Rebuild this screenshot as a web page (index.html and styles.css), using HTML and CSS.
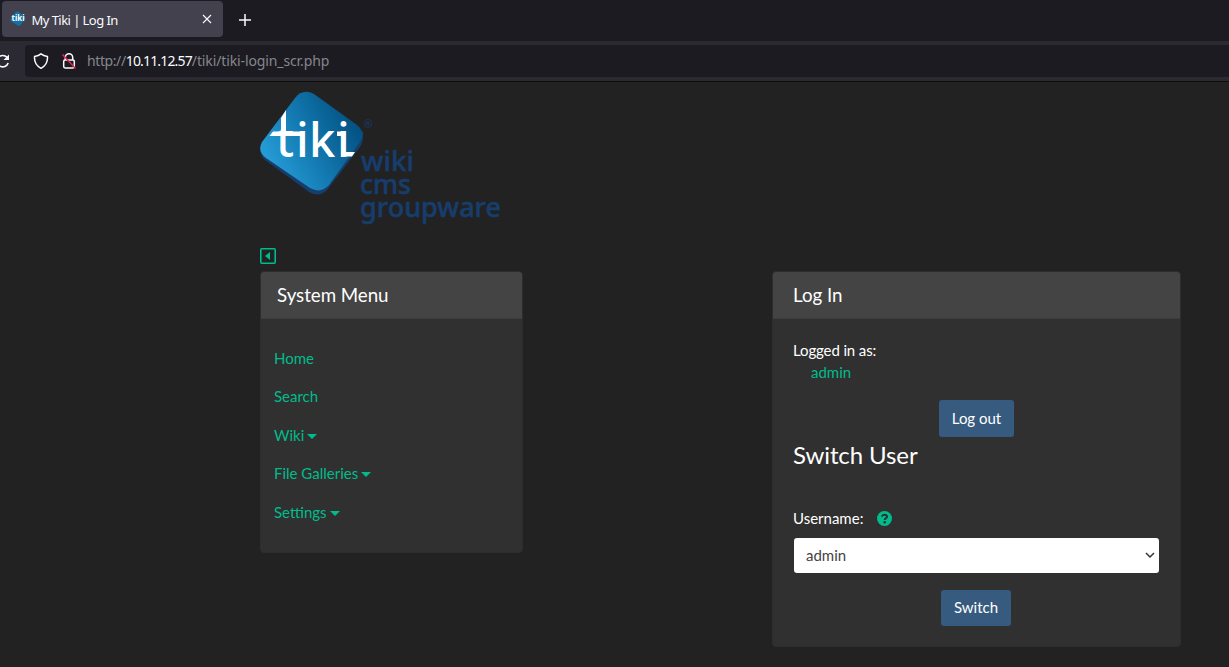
FILE: index.html
```html
<!DOCTYPE html>
<html lang="en">
<head>
<meta charset="utf-8">
<title>My Tiki | Log In</title>
<link rel="stylesheet" href="styles.css">
</head>
<body>
<header class="browser">
  <div class="tabs">
    <div class="tab">
      <svg class="favicon" width="16" height="16" viewBox="0 0 16 16"><path d="M6 .8Q7.500 0 8.800.9l6 4.700q1 1 .2 2.200l-4.500 6.500q-1 1.200-2.300.4L.8 10.200Q-.2 9.200.6 8z" fill="#136fa5"/><text x="1.500" y="10" textLength="13" lengthAdjust="spacingAndGlyphs" class="favicon-text">tiki</text></svg>
      <span class="tab-title">My Tiki | Log In</span>
      <svg class="close" width="10" height="10" viewBox="0 0 10 10"><path d="M1 1l8 8M9 1l-8 8"/></svg>
    </div>
    <svg class="plus" width="12" height="12" viewBox="0 0 12 12"><path d="M6 0v12M0 6h12"/></svg>
  </div>
  <div class="toolbar">
    <svg class="reload" width="10" height="16" viewBox="0 0 10 16"><path d="M8.200 10A5.700 5.700 0 1 1 7 4.300"/><path d="M9 1.500v5.500H3.500z" class="solid"/></svg>
    <div class="address">
      <svg width="16" height="16" viewBox="0 0 16 16" class="shield"><path d="M8 .9c1.800 1.500 4 2.200 6.400 2.500C15 9 12.800 12.800 8 15.300 3.200 12.800 1 9 1.600 3.400 4 3.100 6.200 2.400 8 .9z"/></svg>
      <svg width="16" height="16" viewBox="0 0 16 16" class="lock"><path d="M4.300 7V4.500a3.700 3.700 0 0 1 7.400 0V7"/><rect x="2.700" y="7" width="10.600" height="8" rx="1.400"/><path d="M1.500 1.500l13 14" class="slash"/></svg>
      <span class="url"><span class="scheme">http://</span><b>10.11.12.57</b>/tiki/tiki-login_scr.php</span>
    </div>
  </div>
</header>
<main class="page">
  <svg class="logo" width="244" height="134" viewBox="0 0 244 134">
    <defs>
      <linearGradient id="face" x1="0" y1=".75" x2="1" y2=".25"><stop offset="0" stop-color="#29a3dd"/><stop offset=".5" stop-color="#1277ae"/><stop offset="1" stop-color="#004b7b"/></linearGradient>
    </defs>
    <path d="M1 55Q-1 64 5 69L49 101q10 6 18-2L100 56q4-6 3-16z" fill="#173d6d"/>
    <path d="M35 7q8-10 19-4L97 34q9 7 3 17L69 94q-8 9-19 3L6 67q-9-7-4-16z" fill="url(#face)"/>
    <g fill="#fff">
      <path d="M26 19v26h-5V27z"/>
      <path d="M13 40.500h28v4.500H9.500z"/>
      <path d="M77 40.500h7v4.500h-7z"/>
      <path d="M81 61h14l-3 4.500H81z"/>
    </g>
    <text x="16 36 49 77" y="65.500" class="wordmark">tiki</text>
    <text x="103.500" y="36.500" class="registered">®</text>
    <g class="tagline">
      <text x="101" y="79.500" textLength="53" lengthAdjust="spacingAndGlyphs">wiki</text>
      <text x="100" y="103" textLength="51" lengthAdjust="spacingAndGlyphs">cms</text>
      <text x="100" y="126" textLength="141" lengthAdjust="spacingAndGlyphs">groupware</text>
    </g>
  </svg>
  <a class="toggle"><svg width="16" height="16" viewBox="0 0 16 16"><rect x=".8" y=".8" width="14.400" height="14.400" rx="1" fill="none" stroke="#00bc8c" stroke-width="1.600"/><path d="M10 4v8L5 8z" fill="#00bc8c"/></svg></a>
  <div class="columns">
    <section class="card menu">
      <h3 class="card-header">System Menu</h3>
      <nav>
        <a>Home</a>
        <a>Search</a>
        <a class="drop">Wiki</a>
        <a class="drop">File Galleries</a>
        <a class="drop">Settings</a>
      </nav>
    </section>
    <section class="card login">
      <h3 class="card-header">Log In</h3>
      <div class="login-body">
        <div class="status">Logged in as:</div>
        <a class="user">admin</a>
        <button class="btn logout">Log out</button>
        <h4>Switch User</h4>
        <div class="label">Username: <svg width="15" height="15" viewBox="0 0 15 15"><circle cx="7.500" cy="7.500" r="7.500" fill="#00bc8c"/><path d="M4.800 5.600c.4-1.300 1.400-1.900 2.600-1.900 1.500 0 2.600.8 2.600 2 0 1.600-2.300 1.600-2.300 3.300" fill="none" stroke="#303030" stroke-width="2"/><circle cx="7.700" cy="11.300" r="1.300" fill="#303030"/></svg></div>
        <div class="select"><span>admin</span><svg width="10" height="7" viewBox="0 0 10 7"><path d="M1 1l4 4 4-4" fill="none" stroke="#333" stroke-width="1.500"/></svg></div>
        <button class="btn switch">Switch</button>
      </div>
    </section>
  </div>
</main>
</body>
</html>
```
FILE: styles.css
```css
* { box-sizing: border-box; }
body { margin: 0; height: 667px; overflow: hidden; background: #222; color: #fff; font: 15px/22.5px Lato, sans-serif; }
svg { display: block; flex: none; }
h3, h4 { margin: 0; font-weight: 400; }

.browser { height: 82px; background: #2b2a33; border-bottom: 1px solid #0c0c0d; font-family: "Noto Sans", sans-serif; }
.tabs { display: flex; align-items: flex-start; height: 41px; padding: 1px 0 0 2px; background: #1c1b22; }
.tab { display: flex; align-items: center; width: 221px; height: 36px; padding: 0 11px 0 8px; border-radius: 4px; background: #42414d; color: #fbfbfe; font-size: 13px; }
.tab-title { margin-left: 5.5px; flex: 1; letter-spacing: -0.55px; padding-top: 2px; }
.favicon-text { font: bold 8px "Noto Sans", sans-serif; fill: #fff; }
.close, .plus, .reload, .shield, .lock { fill: none; stroke: #fbfbfe; }
.close { stroke-width: 1.1; }
.plus { margin: 13px 0 0 16px; stroke-width: 1.5; }
.toolbar { display: flex; align-items: center; height: 40px; }
.reload { stroke-width: 1.6; }
.reload .solid { fill: #fbfbfe; stroke: none; }
.address { display: flex; align-items: center; flex: 1; height: 32px; margin-left: 15px; padding-left: 8px; border-radius: 4px 0 0 4px; background: #1c1b22; }
.shield, .lock { stroke-width: 1.5; }
.lock { margin-left: 12px; }
.lock .slash { stroke: #e22850; }
.url { margin-left: 10px; color: #86868d; font-size: 14px; letter-spacing: -0.12px; }
.scheme { letter-spacing: -0.4px; }
.url b { color: #fbfbfe; font-weight: 400; letter-spacing: -0.84px; }

.page { padding: 9px 48px 0 260px; }
.wordmark { font: 500 47px "Noto Sans", sans-serif; fill: #fff; }
.registered { font: 11px "Noto Sans", sans-serif; fill: #173d6d; }
.tagline { font: 500 27px "Noto Sans", sans-serif; fill: #173d6d; stroke: #173d6d; stroke-width: .5; }
.toggle { display: block; margin: 23px 0 7px; }
.columns { display: flex; justify-content: space-between; align-items: flex-start; }
.card { border: 1px solid #2d2d2d; border-radius: 4px; background: #303030; }
.card-header { height: 47px; padding: 12px 20px; border-bottom: 1px solid #3c3c3c; border-radius: 3px 3px 0 0; background: #444; font-size: 18.75px; line-height: 22.5px; letter-spacing: -0.05px; }
.menu { width: 263px; height: 282px; }
.menu .card-header { padding-left: 16px; }
.menu nav { display: flex; flex-direction: column; gap: 16px; padding: 27.8px 13px; }
a { color: #00bc8c; }
.drop::after { content: ""; display: inline-block; margin-left: 3px; vertical-align: 2px; border: 5px solid transparent; border-top-color: #00bc8c; border-bottom: 0; }
.login { width: 409px; height: 376px; }
.login-body { display: flex; flex-direction: column; padding: 20px; }
.status { height: 22px; letter-spacing: -0.12px; }
.user { height: 22px; margin-left: 18px; }
.btn { align-self: center; height: 37px; padding: 0; border: 0; border-radius: 3px; background: #375a7f; color: #fff; font: 15px/22.5px Lato, sans-serif; }
.logout { width: 75px; margin-top: 17px; }
h4 { margin-top: 4px; font-size: 24px; line-height: 27px; letter-spacing: -0.1px; }
.label { display: flex; align-items: center; gap: 14px; margin-top: 39px; height: 23px; }
.select { display: flex; align-items: center; justify-content: space-between; height: 35px; margin: 8px 1px 0; padding: 0 4px 0 12px; border-radius: 3px; background: #fff; color: #444; }
.switch { width: 70px; height: 36px; margin-top: 17px; margin-right: 1px; padding-bottom: 1px; }
```
